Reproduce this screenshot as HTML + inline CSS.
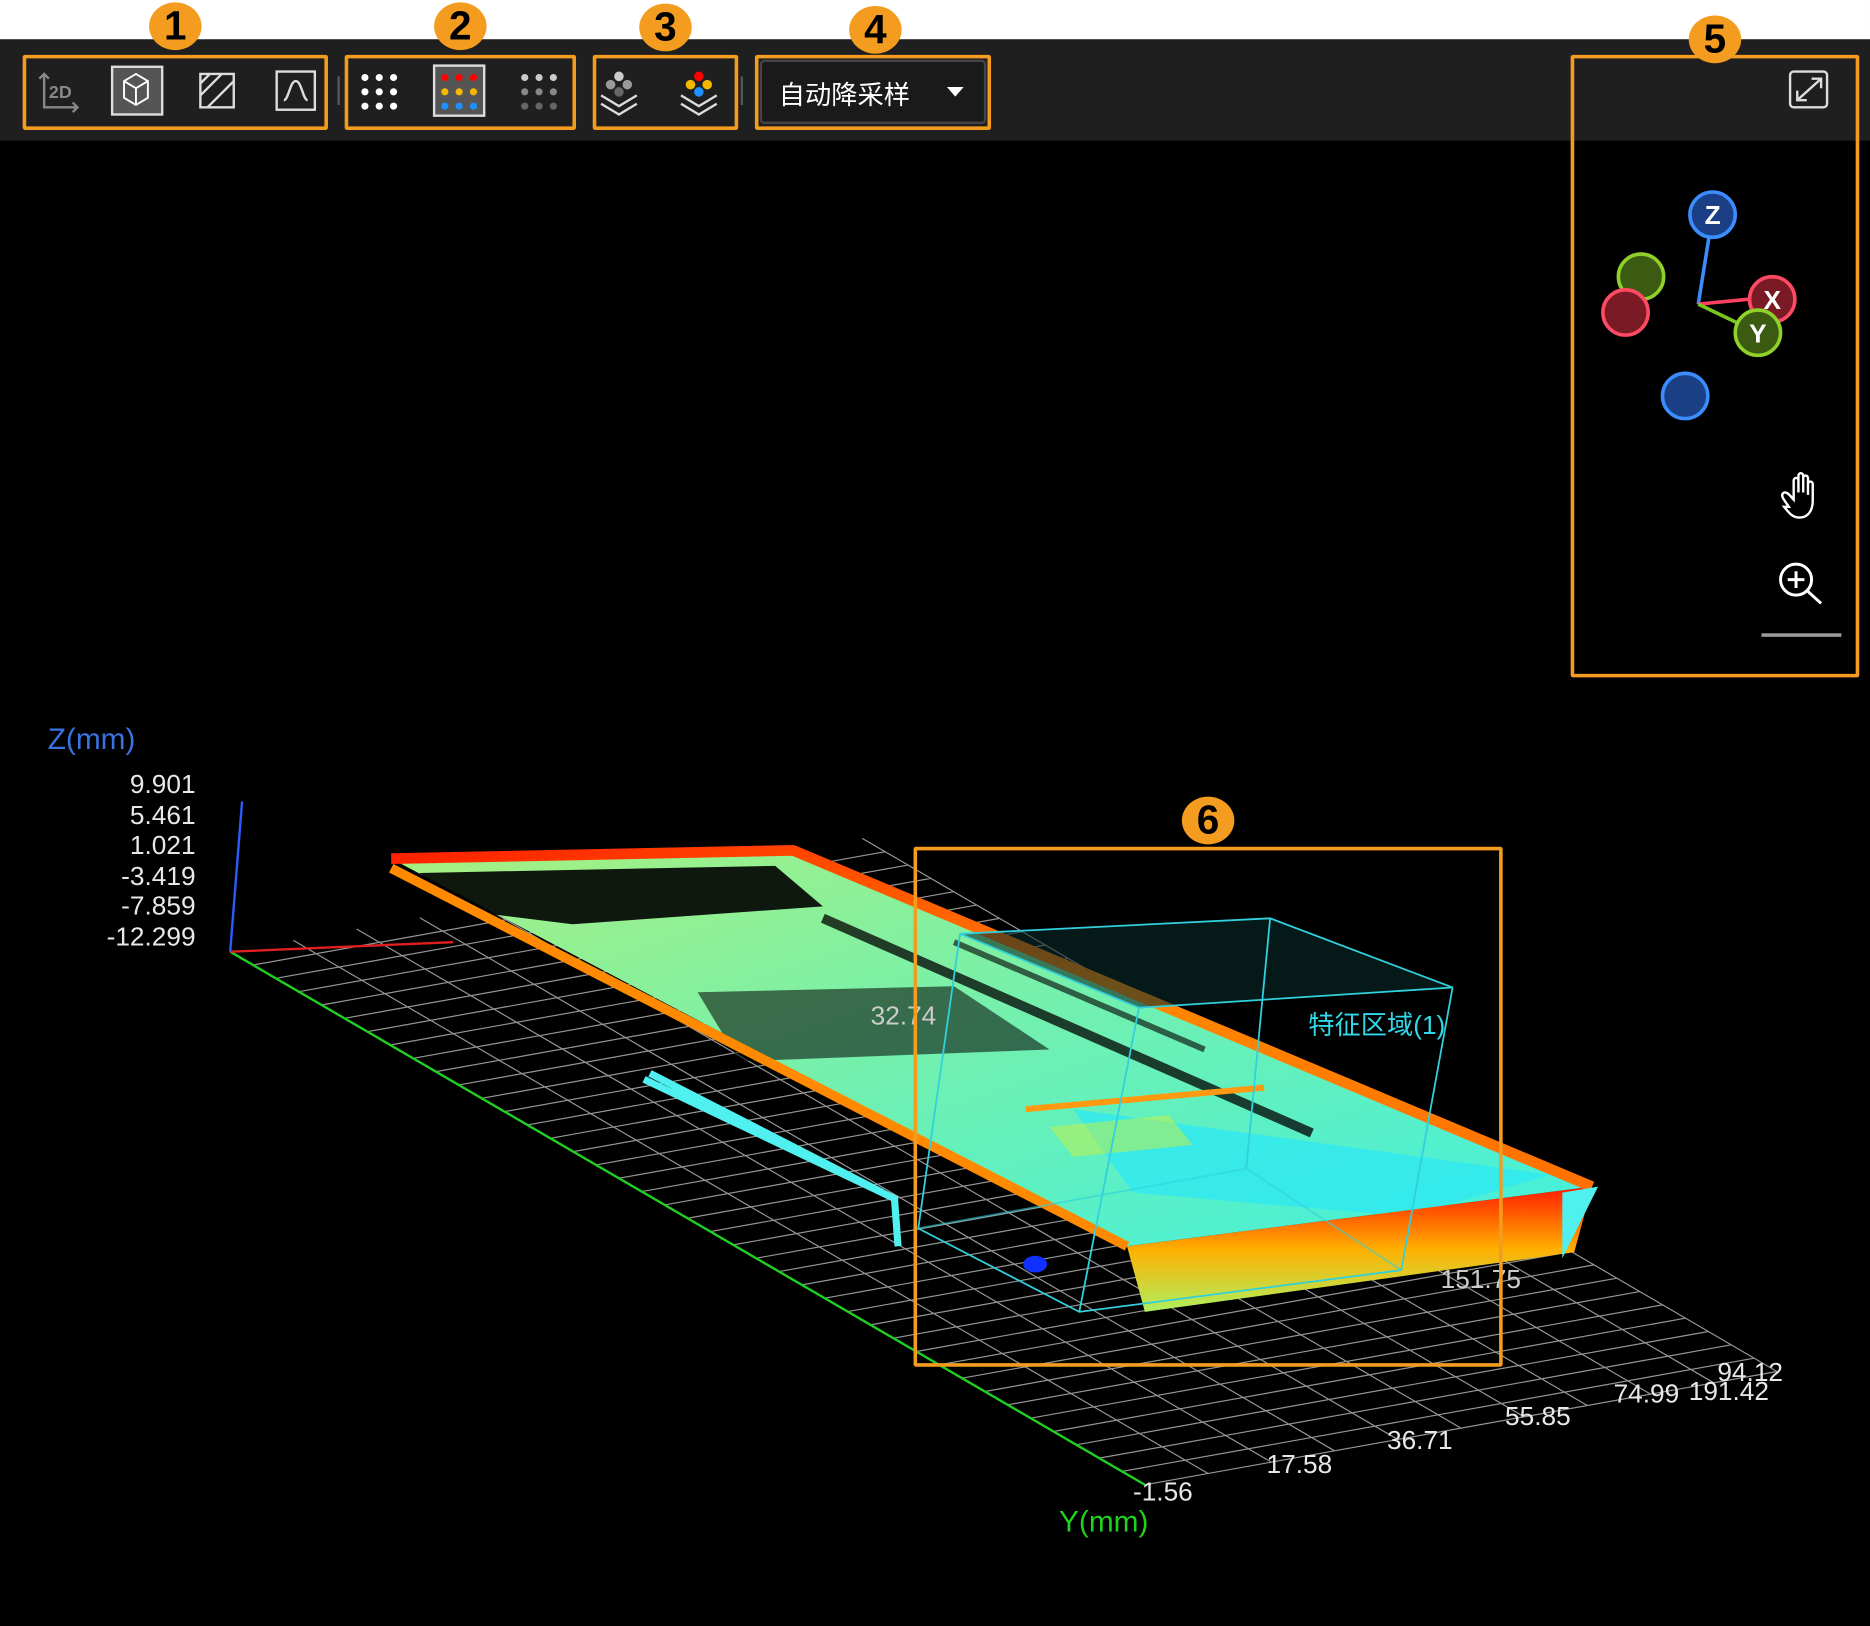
<!DOCTYPE html>
<html><head><meta charset="utf-8"><style>
html,body{margin:0;padding:0;background:#000;width:1870px;height:1626px;overflow:hidden}
#s{position:absolute;left:0;top:0;width:1568px;height:1363px;transform:scale(1.19260);transform-origin:0 0;font-family:"Liberation Sans","Noto Sans CJK SC",sans-serif}
.a{position:absolute}
.ob{position:absolute;border:3px solid #f39c1f;border-radius:2px;box-sizing:border-box}
.num{position:absolute;width:44px;height:40px;border-radius:50%;background:#f39c1f;color:#000;font:bold 34px "Liberation Sans",sans-serif;text-align:center;line-height:40px}
.t{position:absolute;color:#e8e8e8;font-size:22px;white-space:nowrap}
</style></head><body><div id="s">
<div class="a" style="left:0;top:0;width:1568px;height:33px;background:#fff"></div>
<div class="a" style="left:0;top:33px;width:1568px;height:85px;background:#1f1f1f"></div>

<svg class="a" style="left:0;top:0" width="1568" height="1363" viewBox="0 0 1568 1363">
<g stroke="#888" fill="none" stroke-width="2"><path d="M37 62v28h28M33 66l4-4 4 4M61 86l4 4-4 4"/></g>
<text x="41" y="82" fill="#888" font-size="15" font-weight="bold" font-family="Liberation Sans">2D</text>
<rect x="94" y="56" width="42" height="40" fill="#555" stroke="#ddd" stroke-width="2"/>
<g stroke="#fff" fill="none" stroke-width="1.6"><path d="M104 68l10-6 10 6v14l-10 6-10-6zM104 68l10 6 10-6M114 74v14"/></g>
<rect x="168" y="62" width="28" height="28" fill="none" stroke="#ddd" stroke-width="2"/>
<path d="M168 80l18-18M174 90l22-22M168 70l8-8" stroke="#ddd" stroke-width="2"/>
<rect x="232" y="60" width="32" height="32" fill="none" stroke="#ddd" stroke-width="2"/>
<path d="M238 84c4 0 5-16 10-16s6 16 10 16" stroke="#ddd" stroke-width="2" fill="none"/>
<rect x="283" y="64" width="2" height="24" fill="#555"/>
<g fill="#fff"><circle cx="306" cy="65" r="3"/><circle cx="318" cy="65" r="3"/><circle cx="330" cy="65" r="3"/><circle cx="306" cy="77" r="3"/><circle cx="318" cy="77" r="3"/><circle cx="330" cy="77" r="3"/><circle cx="306" cy="89" r="3"/><circle cx="318" cy="89" r="3"/><circle cx="330" cy="89" r="3"/></g>
<rect x="364" y="55" width="42" height="42" fill="#555" stroke="#ddd" stroke-width="2"/>
<g><circle cx="373" cy="65" r="3" fill="#f00"/><circle cx="385" cy="65" r="3" fill="#f00"/><circle cx="397" cy="65" r="3" fill="#f00"/><circle cx="373" cy="77" r="3" fill="#f5b800"/><circle cx="385" cy="77" r="3" fill="#f5b800"/><circle cx="397" cy="77" r="3" fill="#f5b800"/><circle cx="373" cy="89" r="3" fill="#1e90ff"/><circle cx="385" cy="89" r="3" fill="#1e90ff"/><circle cx="397" cy="89" r="3" fill="#1e90ff"/></g>
<g fill="#ccc"><circle cx="440" cy="65" r="3"/><circle cx="452" cy="65" r="3"/><circle cx="464" cy="65" r="3"/></g>
<g fill="#888"><circle cx="440" cy="77" r="3"/><circle cx="452" cy="77" r="3"/><circle cx="464" cy="77" r="3"/></g>
<g fill="#666"><circle cx="440" cy="89" r="3"/><circle cx="452" cy="89" r="3"/><circle cx="464" cy="89" r="3"/></g>
<circle cx="519" cy="64" r="4" fill="#ccc"/><circle cx="512" cy="71" r="4" fill="#999"/><circle cx="526" cy="71" r="4" fill="#999"/><circle cx="519" cy="77" r="4" fill="#666"/>
<path d="M504 80l15 9 15-9M504 87l15 9 15-9" stroke="#ddd" stroke-width="2" fill="none"/>
<circle cx="586" cy="64" r="4" fill="#f00"/><circle cx="579" cy="71" r="4" fill="#f5b800"/><circle cx="593" cy="71" r="4" fill="#f5b800"/><circle cx="586" cy="77" r="4" fill="#1e90ff"/>
<path d="M571 80l15 9 15-9M571 87l15 9 15-9" stroke="#ddd" stroke-width="2" fill="none"/>
<rect x="621" y="64" width="2" height="24" fill="#555"/>
<rect x="638" y="51" width="188" height="52" rx="3" fill="#1a1a1a" stroke="#444" stroke-width="2"/>
<path d="M794 73h14l-7 8z" fill="#fff"/>
<rect x="1501" y="60" width="31" height="30" rx="3" fill="none" stroke="#ddd" stroke-width="2"/>
<path d="M1507 84l20-18M1519 66h8v8M1507 76v8h8" stroke="#ddd" stroke-width="2" fill="none"/>
<path d="M1436 180l-12 75" stroke="#3a8cff" stroke-width="3" fill="none"/>
<path d="M1424 255l62-6" stroke="#ff4060" stroke-width="3"/><path d="M1424 255l50 24" stroke="#7ac520" stroke-width="3"/>
<circle cx="1376" cy="232" r="19" fill="#3b5a12" stroke="#8fd12a" stroke-width="3"/>
<circle cx="1363" cy="262" r="19" fill="#7a1a24" stroke="#ff4a63" stroke-width="3"/>
<circle cx="1413" cy="332" r="19" fill="#1b3f85" stroke="#3a8cff" stroke-width="3"/>
<circle cx="1436" cy="180" r="19" fill="#1b3f85" stroke="#3a8cff" stroke-width="3"/>
<circle cx="1486" cy="251" r="19" fill="#7a1a24" stroke="#ff4a63" stroke-width="3"/>
<circle cx="1474" cy="279" r="19" fill="#3b5a12" stroke="#8fd12a" stroke-width="3"/>
<g fill="#fff" font-weight="bold" font-size="22" font-family="Liberation Sans" text-anchor="middle"><text x="1436" y="188">Z</text><text x="1486" y="259">X</text><text x="1474" y="287">Y</text></g>
<path d="M1500 425c-4-6-8-10-4-12 3-1 6 4 8 6v-16c0-3 4-3 4 0v10-14c0-3 4-3 4 0v14-12c0-3 4-3 4 0v14-9c0-3 4-3 4 0v14c0 8-4 14-11 14-6 0-9-4-13-9z" stroke="#fff" stroke-width="2" fill="none"/>
<circle cx="1506" cy="486" r="13" fill="none" stroke="#fff" stroke-width="2.5"/>
<path d="M1506 479v14M1499 486h14M1516 496l11 10" stroke="#fff" stroke-width="2.5"/>
<rect x="1477" y="531" width="67" height="3" fill="#999"/>

<g transform="matrix(767,447,530,-95,193,798)" stroke="#c8c8c8" stroke-width="1" opacity="0.75" fill="none">
<path vector-effect="non-scaling-stroke" d="M0 .1H1M0 .2H1M0 .3H1M0 .4H1M0 .5H1M0 .6H1M0 .7H1M0 .8H1M0 .9H1M0 1H1M.025 0V1M.05 0V1M.075 0V1M.1 0V1M.125 0V1M.15 0V1M.175 0V1M.2 0V1M.225 0V1M.25 0V1M.275 0V1M.3 0V1M.325 0V1M.35 0V1M.375 0V1M.4 0V1M.425 0V1M.45 0V1M.475 0V1M.5 0V1M.525 0V1M.55 0V1M.575 0V1M.6 0V1M.625 0V1M.65 0V1M.675 0V1M.7 0V1M.725 0V1M.75 0V1M.775 0V1M.8 0V1M.825 0V1M.85 0V1M.875 0V1M.9 0V1M.925 0V1M.95 0V1M.975 0V1M1 0V1"/>
</g>
<path d="M193 798L960 1245" stroke="#20d020" stroke-width="2"/>
<path d="M193 798L380 790" stroke="#e02020" stroke-width="2"/>
<path d="M193 798L203 672" stroke="#2a5cff" stroke-width="2"/>

<defs>
<linearGradient id="fg" x1="0" y1="0" x2="0" y2="1"><stop offset="0" stop-color="#ff1a00"/><stop offset=".5" stop-color="#ffb000"/><stop offset="1" stop-color="#aef060"/></linearGradient>
<linearGradient id="ig" x1="0" y1="0" x2="1" y2="1"><stop offset="0" stop-color="#a8f080"/><stop offset=".5" stop-color="#70f0b0"/><stop offset="1" stop-color="#40f0e0"/></linearGradient>
<linearGradient id="rg" x1="0" y1="0" x2="1" y2="1"><stop offset="0" stop-color="#ff2000"/><stop offset=".5" stop-color="#ff8800"/><stop offset="1" stop-color="#ff7000"/></linearGradient>
</defs>
<path d="M540 905l210 100 3 40M545 900l195 100" stroke="#50f0f0" stroke-width="6" fill="none"/>
<path d="M328 720L665 713L1335 995L945 1045Z" fill="url(#ig)"/>
<path d="M352 732L650 726L690 760L480 775L360 760Z" fill="#000" opacity=".9"/>
<path d="M585 832L800 827L880 880L620 890Z" fill="#000" opacity=".55"/>
<path d="M690 770L1100 950" stroke="#000" stroke-width="8" opacity=".75"/>
<path d="M800 790L1010 880" stroke="#000" stroke-width="5" opacity=".6"/>
<path d="M900 930L1300 985L1180 1020L950 1000Z" fill="#30e8f0" opacity=".8"/>
<path d="M880 945L980 935L1000 960L900 970Z" fill="#c8f040" opacity=".5"/>
<path d="M860 930L1060 912" stroke="#ff9a10" stroke-width="5"/>
<path d="M945 1045L1335 995L1320 1050L960 1100Z" fill="url(#fg)"/>
<path d="M328 720L665 713L1335 995" stroke="url(#rg)" stroke-width="9" fill="none" stroke-linejoin="round"/>
<path d="M328 728L945 1045" stroke="#ff8a00" stroke-width="8" fill="none"/>
<path d="M1310 1000l30-5-30 60z" fill="#50f0f0"/>
<ellipse cx="868" cy="1060" rx="10" ry="7" fill="#1030ff"/>
<g stroke="#30d0dc" stroke-width="1.5" fill="none">
<path d="M805 783L1065 770L1218 828L955 845Z" fill="#0a2a2a" fill-opacity=".6"/>
<path d="M805 783L770 1030L905 1100L1175 1065L1218 828M955 845L905 1100M1065 770L1045 980"/>
<path d="M770 1030L1045 980L1175 1065" opacity=".6"/>
</g>
</svg>

<div class="t" style="left:653px;top:62px;color:#fff;font-size:22px">自动降采样</div>

<div class="t" style="left:40px;top:606px;color:#3a72e0;font-size:25px">Z(mm)</div>
<div class="t" style="left:60px;top:645px;width:104px;text-align:right;line-height:25.5px">9.901<br>5.461<br>1.021<br>-3.419<br>-7.859<br>-12.299</div>
<div class="t" style="left:888px;top:1262px;color:#20d020;font-size:25px">Y(mm)</div>
<div class="t" style="left:950px;top:1238px">-1.56</div>
<div class="t" style="left:1062px;top:1215px">17.58</div>
<div class="t" style="left:1163px;top:1195px">36.71</div>
<div class="t" style="left:1262px;top:1175px">55.85</div>
<div class="t" style="left:1353px;top:1156px">74.99</div>
<div class="t" style="left:1416px;top:1154px">191.42</div>
<div class="t" style="left:1440px;top:1138px">94.12</div>
<div class="t" style="left:1208px;top:1060px;color:#ccc">151.75</div>
<div class="t" style="left:730px;top:839px;color:#ccc">32.74</div>
<div class="t" style="left:1097px;top:842px;color:#30d8e8">特征区域(1)</div>

<div class="ob" style="left:19px;top:46px;width:256px;height:63px"></div>
<div class="ob" style="left:289px;top:46px;width:194px;height:63px"></div>
<div class="ob" style="left:497px;top:46px;width:122px;height:63px"></div>
<div class="ob" style="left:633px;top:46px;width:198px;height:63px"></div>
<div class="ob" style="left:1317px;top:46px;width:242px;height:522px"></div>
<div class="ob" style="left:766px;top:710px;width:494px;height:436px"></div>
<div class="num" style="left:125px;top:2px">1</div>
<div class="num" style="left:364px;top:2px">2</div>
<div class="num" style="left:536px;top:3px">3</div>
<div class="num" style="left:712px;top:5px">4</div>
<div class="num" style="left:1416px;top:13px">5</div>
<div class="num" style="left:991px;top:668px">6</div>
</div></body></html>
